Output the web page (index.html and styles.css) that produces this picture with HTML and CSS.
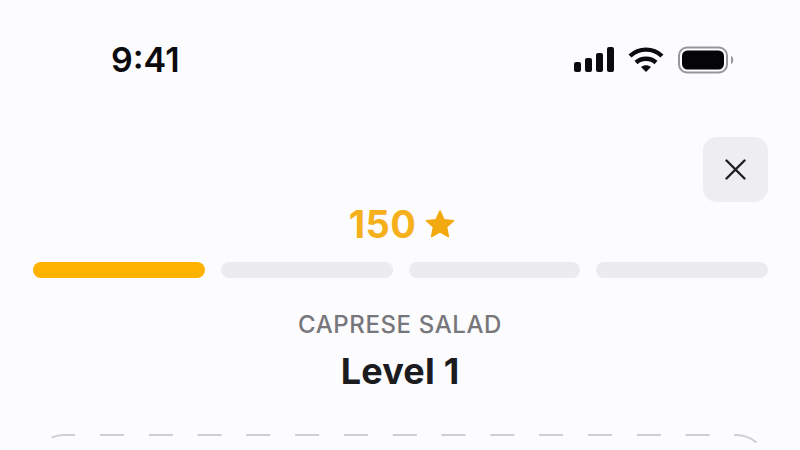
FILE: index.html
```html
<!DOCTYPE html>
<html lang="en">
<head>
<meta charset="utf-8">
<title>Level 1</title>
<link rel="stylesheet" href="styles.css">
</head>
<body>
<div class="screen">
  <header class="status">
    <span class="time">9:41</span>
    <div class="status-icons">
      <svg class="signal" width="40" height="26" viewBox="0 0 40 26" fill="#0b0b0d"><rect x="0" y="15" width="7" height="10" rx="2"/><rect x="11" y="11" width="7" height="14" rx="2"/><rect x="22" y="6" width="7" height="19" rx="2"/><rect x="33" y="0" width="7" height="25" rx="2"/></svg>
      <svg class="wifi" width="36" height="26" viewBox="0 0 36 26" fill="none" stroke="#0b0b0d" stroke-width="4.4"><path d="M2 9 C11 0.5 25 0.5 34 9"/><path d="M8 15.500 C13.500 10.500 22.500 10.500 28 15.500"/><path d="M13 20 L18 25 L23 20 C20 17.600 16 17.600 13 20Z" fill="#0b0b0d" stroke="none"/></svg>
      <svg class="battery" width="56" height="28" viewBox="0 0 56 28"><rect x="1" y="1.500" width="48" height="25" rx="8" fill="none" stroke="#97979b" stroke-width="2"/><rect x="4" y="4.500" width="42" height="19" rx="5.500" fill="#050507"/><path d="M53 10 C56 11 56 17 53 18Z" fill="#97979b"/></svg>
    </div>
  </header>
  <div class="toolbar">
    <button class="close" aria-label="Close">
      <svg width="22" height="22" viewBox="0.500 0.500 22 22" fill="none" stroke="#1f2024" stroke-width="2.400" stroke-linecap="round"><path d="M2 2 L20 20 M20 2 L2 20"/></svg>
    </button>
  </div>
  <div class="score">
    <span>150</span>
    <svg width="30" height="28" viewBox="0 0 30 28" fill="#f2a80f"><path d="M15 1 L19 9.700 L28.500 10.800 L21.500 17.200 L23.400 26.500 L15 21.800 L6.600 26.500 L8.500 17.200 L1.500 10.800 L11 9.700 Z" stroke="#f2a80f" stroke-width="1.500" stroke-linejoin="round"/></svg>
  </div>
  <div class="progress">
    <div class="seg active"></div>
    <div class="seg"></div>
    <div class="seg"></div>
    <div class="seg"></div>
  </div>
  <div class="eyebrow">CAPRESE SALAD</div>
  <h1 class="title">Level 1</h1>
  <svg class="card" width="738" height="17" viewBox="0 0 738 17" fill="none"><path d="M1 34 A32 32 0 0 1 33 2 H705 A32 32 0 0 1 737 34" stroke="#cfcfd2" stroke-width="2" stroke-dasharray="24 24.800" stroke-dashoffset="-37.300"/></svg>
</div>
</body>
</html>
```

FILE: styles.css
```css
html, body {
  margin: 0;
  padding: 0;
}
body {
  width: 800px;
  height: 450px;
  overflow: hidden;
  background: #fcfbfe;
  font-family: Inter, "Liberation Sans", sans-serif;
}
.screen {
  display: flex;
  flex-direction: column;
}
.status {
  display: flex;
  justify-content: space-between;
  align-items: center;
  height: 40px;
  padding: 40px 66px 0 111px;
}
.time {
  font-size: 34px;
  line-height: 40px;
  font-weight: 600;
  color: #0b0b0d;
}
.status-icons {
  display: flex;
  align-items: center;
  gap: 14px;
}
.toolbar {
  display: flex;
  justify-content: flex-end;
  padding: 57px 32px 0 0;
}
.close {
  display: flex;
  align-items: center;
  justify-content: center;
  width: 65px;
  height: 65px;
  padding: 0;
  border: 0;
  border-radius: 14px;
  background: #eeeef1;
}
.score {
  display: flex;
  justify-content: center;
  align-items: center;
  gap: 9px;
  height: 43px;
  padding-left: 4px;
  font-size: 38px;
  font-weight: 700;
  letter-spacing: 0.4px;
  color: #f5b01c;
}
.progress {
  display: flex;
  gap: 16px;
  padding: 17px 32px 0 33px;
}
.seg {
  flex: 1;
  height: 16px;
  border-radius: 8px;
  background: #ececef;
}
.seg.active {
  background: #ffb300;
}
.eyebrow {
  margin-top: 32px;
  text-align: center;
  font-size: 24px;
  line-height: 30px;
  font-weight: 500;
  letter-spacing: 0.6px;
  color: #77777b;
}
.title {
  margin: 9px 0 0;
  text-align: center;
  font-size: 36px;
  line-height: 44px;
  font-weight: 700;
  letter-spacing: 0.2px;
  color: #1b1b20;
}
.card {
  flex: none;
  display: block;
  margin: 40px 0 0 31px;
}
```
